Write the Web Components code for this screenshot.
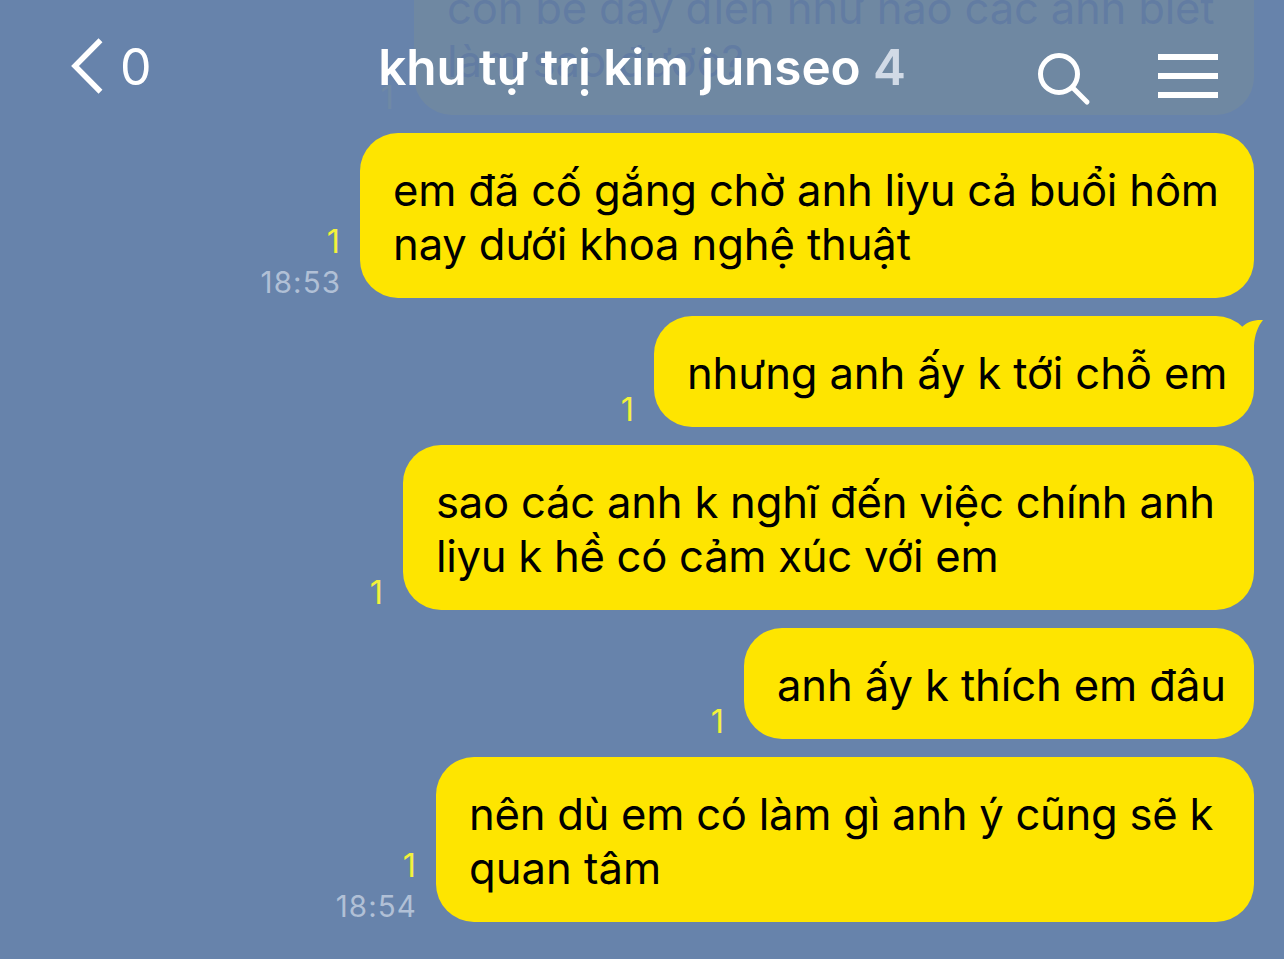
<!DOCTYPE html>
<html lang="vi">
<head>
<meta charset="utf-8">
<title>Chat</title>
<style>
  body {
    margin: 0;
    font-family: Inter, "Noto Sans", sans-serif;
  }
</style>
</head>
<body>
<chat-room>
  <chat-header slot="header" unread="0" members="4">khu tự trị kim junseo</chat-header>

  <chat-message unread="1" width="840">
    <chat-line tracking="-0.2">con bé đấy điên như nào các anh biết</chat-line>
    <chat-line>làm sao được?</chat-line>
  </chat-message>
  <chat-message unread="1" time="18:53" width="894">
    <chat-line tracking="-0.19">em đã cố gắng chờ anh liyu cả buổi hôm</chat-line>
    <chat-line tracking="-0.13">nay dưới khoa nghệ thuật</chat-line>
  </chat-message>
  <chat-message unread="1" width="600" tail>
    <chat-line tracking="-0.14">nhưng anh ấy k tới chỗ em</chat-line>
  </chat-message>
  <chat-message unread="1" width="851">
    <chat-line tracking="-0.23">sao các anh k nghĩ đến việc chính anh</chat-line>
    <chat-line tracking="-0.27">liyu k hề có cảm xúc với em</chat-line>
  </chat-message>
  <chat-message unread="1" width="510">
    <chat-line tracking="-0.12">anh ấy k thích em đâu</chat-line>
  </chat-message>
  <chat-message unread="1" time="18:54" width="818">
    <chat-line tracking="-0.26">nên dù em có làm gì anh ý cũng sẽ k</chat-line>
    <chat-line>quan tâm</chat-line>
  </chat-message>
</chat-room>

<script>
class ChatRoom extends HTMLElement {
  constructor() {
    super();

    const shadowRoot = this.attachShadow({ mode: 'open' });
    shadowRoot.innerHTML = `
    <style>
        :host {
            display: grid;
            height: 100vh;
            overflow: hidden;
            background: #6783ab;
        }
        .messages, ::slotted([slot=header]) {
            grid-area: 1 / 1;
        }
        .messages {
            display: flex;
            flex-direction: column;
            justify-content: flex-end;
            gap: 18.4px;
            min-height: 0;
            padding: 0 30px 37.3px 0;
        }
        /* the header stays above the scrolled messages */
        ::slotted([slot=header]) {
            align-self: start;
            z-index: 1;
        }
    </style>
    <div class="messages"><slot></slot></div>
    <slot name="header"></slot>`;
  }
}

class ChatHeader extends HTMLElement {
  constructor() {
    super();

    const shadowRoot = this.attachShadow({ mode: 'open' });
    shadowRoot.innerHTML = `
    <style>
        :host {
            display: grid;
            grid-template-columns: 1fr auto 1fr;
            align-items: center;
            box-sizing: border-box;
            height: 130px;
            padding: 3px 66px 0;
            background: rgba(103, 131, 171, 0.95);
            color: #fff;
            font-size: 50px;
            line-height: 60px;
            white-space: nowrap;
        }
        .back, .tools {
            display: flex;
            align-items: center;
        }
        .back {
            gap: 16px;
            padding-left: 4px;
        }
        .title {
            font-size: 49.5px;
            font-weight: 600;
            letter-spacing: -0.1px;
        }
        [members] {
            color: #d1dae6;
        }
        .tools {
            justify-content: flex-end;
            gap: 67px;
            padding-top: 18px;
        }
        svg {
            display: block;
            fill: none;
            stroke: #fff;
        }
        .search {
            margin-top: 6px;
        }
    </style>
    <div class="back">
        <svg width="34" height="58" viewBox="0 0 34 58" stroke-width="5.500"><path d="M30.500 2.200 5 28 30.500 53.800"/></svg>
        <span unread></span>
    </div>
    <div class="title"><slot></slot> <span members></span></div>
    <div class="tools">
        <svg class="search" width="54" height="54" viewBox="0 0 54 54" stroke-width="5">
            <circle cx="22" cy="22" r="18.500"/>
            <path d="M36 36 50 50" stroke-linecap="round"/>
        </svg>
        <svg width="60" height="44" viewBox="0 0 60 44" stroke-width="6"><path d="M0 3h60M0 22h60M0 41h60"/></svg>
    </div>`;
    this.displayUnread = this.shadowRoot.querySelector('[unread]');
    this.displayMembers = this.shadowRoot.querySelector('[members]');
  }

  connectedCallback() {
    this.displayUnread.textContent = this.getAttribute('unread');
    this.displayMembers.textContent = this.getAttribute('members');
  }
}

class ChatMessage extends HTMLElement {
  constructor() {
    super();

    const shadowRoot = this.attachShadow({ mode: 'open' });
    shadowRoot.innerHTML = `
    <style>
        :host {
            display: flex;
            flex: none;
            justify-content: flex-end;
            align-items: flex-end;
            gap: 20px;
        }
        .meta {
            display: flex;
            flex-direction: column;
            align-items: flex-end;
        }
        [unread] {
            color: #f3f13b;
            font-size: 32.5px;
            line-height: 34px;
        }
        [time] {
            color: #b1c0d6;
            font-size: 29.5px;
            line-height: 32px;
            letter-spacing: 1.1px;
            margin-right: -1px;
            padding-top: 7px;
        }
        [time]:empty {
            display: none;
        }
        .bubble {
            position: relative;
            box-sizing: border-box;
            padding: 30.9px 0 26.3px 33px;
            border-radius: 38px;
            background: #fee500;
            color: #000;
            font-size: 43.6px;
            line-height: 53.6px;
            white-space: nowrap;
        }
        .tail {
            display: none;
            position: absolute;
            top: 0;
            right: -10px;
            fill: #fee500;
        }
        :host([tail]) .tail {
            display: block;
        }
    </style>
    <div class="meta"><span unread></span><span time></span></div>
    <div class="bubble">
        <slot></slot>
        <svg class="tail" width="40" height="50" viewBox="0 0 40 50"><path d="M10 30 18 11C23 6 30 3.500 39 4 34 10 30.500 19 30 30V46Z"/></svg>
    </div>`;
    this.displayUnread = this.shadowRoot.querySelector('[unread]');
    this.displayTime = this.shadowRoot.querySelector('[time]');
    this.bubble = this.shadowRoot.querySelector('.bubble');
  }

  connectedCallback() {
    this.displayUnread.textContent = this.getAttribute('unread');
    this.displayTime.textContent = this.getAttribute('time');
    this.bubble.style.width = `${this.getAttribute('width')}px`;
  }
}

class ChatLine extends HTMLElement {
  constructor() {
    super();

    const shadowRoot = this.attachShadow({ mode: 'open' });
    shadowRoot.innerHTML = `
    <style>
        :host {
            display: block;
        }
    </style>
    <slot></slot>`;
  }

  connectedCallback() {
    if (this.hasAttribute('tracking')) {
      this.style.letterSpacing = `${this.getAttribute('tracking')}px`;
    }
  }
}

customElements.define('chat-room', ChatRoom);
customElements.define('chat-header', ChatHeader);
customElements.define('chat-message', ChatMessage);
customElements.define('chat-line', ChatLine);
</script>
</body>
</html>
